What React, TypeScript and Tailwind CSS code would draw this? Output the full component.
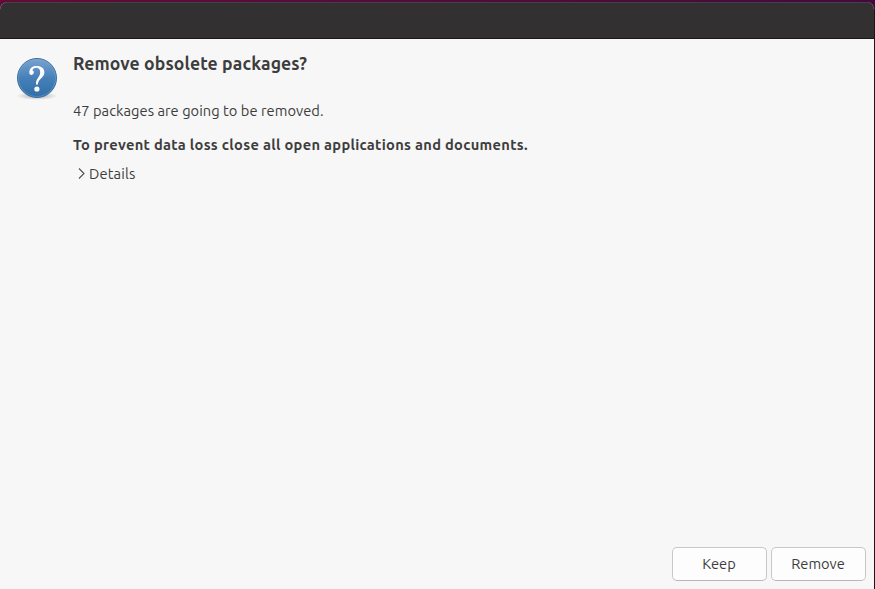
import type { ReactNode } from 'react';

function QuestionIcon() {
  return (
    <svg width="46" height="46" viewBox="0 0 46 46" className="block">
      <defs>
        <linearGradient id="ball" x1="0" y1="0" x2="0" y2="1">
          <stop offset="0" stopColor="#7aa3d0" />
          <stop offset="0.5" stopColor="#4680b8" />
          <stop offset="1" stopColor="#2f6ea8" />
        </linearGradient>
        <radialGradient id="shadow">
          <stop offset="0" stopColor="#000" stopOpacity="0.3" />
          <stop offset="1" stopColor="#000" stopOpacity="0" />
        </radialGradient>
      </defs>
      <ellipse cx="23" cy="40" rx="21" ry="4" fill="url(#shadow)" />
      <circle cx="23" cy="22" r="19.5" fill="url(#ball)" stroke="#3f6f9f" />
      <circle cx="23" cy="22" r="18.5" fill="none" stroke="#8ab4dc" strokeOpacity="0.35" />
      <path
        d="M15.4 17.6C15 12.6 17.8 10 22.6 10C27.6 10 30.4 12.5 30.4 16.4C30.4 21.8 24.2 22.2 23.9 28.6H22C21.6 22.4 26.2 21 26.2 16.4C26.2 13.4 24.8 11.8 22.3 11.8C20.2 11.8 18.9 12.7 18.4 14.3C19.4 14.8 19.9 15.6 19.8 16.6C19.6 19.1 16.1 19.8 15.4 17.6Z"
        fill="#fff"
      />
      <circle cx="22.9" cy="33" r="2.6" fill="#fff" />
    </svg>
  );
}

function DialogButton({ children }: { children: ReactNode }) {
  return (
    <button className="h-[34px] w-[95px] rounded-[5px] border border-[#cbc7c5] border-b-[#bab6b4] bg-[#fdfdfd] pr-px pb-px text-[14.667px] leading-5">
      {children}
    </button>
  );
}

export default function App() {
  return (
    <div className="h-[589px] w-[875px] overflow-hidden bg-gradient-to-r from-[#620b38] to-[#43093f] pt-0.5 font-['Ubuntu','Noto_Sans',sans-serif] text-[#3d3d3d]">
      <div className="flex h-[587px] flex-col overflow-hidden rounded-t-[8px] border-r border-[#251020] bg-[#f7f7f7]">
        <header className="h-[37px] shrink-0 border-t border-b border-t-[#454142] border-b-[#1c1719] bg-[#323031]" />

        <main className="flex flex-1 pl-3.5">
          <div className="pt-[17px]">
            <QuestionIcon />
          </div>
          <div className="ml-[13px] whitespace-nowrap">
            <h1 className="mt-[13px] text-[17.6px] leading-6 font-bold tracking-[0.1px]">
              Remove obsolete packages?
            </h1>
            <p className="mt-[25px] text-[14.667px] leading-5 tracking-[0.04px]">
              47 packages are going to be removed.
            </p>
            <p className="mt-3.5 text-[14.667px] leading-5 font-bold tracking-[0.3px]">
              To prevent data loss close all open applications and documents.
            </p>
            <div className="mt-[9px] flex items-center text-[14.667px] leading-5">
              <svg width="16" height="16" viewBox="0 0 16 16" className="shrink-0">
                <path d="M6 2.5L11 7.5L6 12.5" fill="none" stroke="#505050" strokeWidth="1.1" />
              </svg>
              <span className="tracking-[0.15px]">Details</span>
            </div>
          </div>
        </main>

        <footer className="flex justify-end gap-1 pr-2 pb-2">
          <DialogButton>Keep</DialogButton>
          <DialogButton>Remove</DialogButton>
        </footer>
      </div>
    </div>
  );
}
